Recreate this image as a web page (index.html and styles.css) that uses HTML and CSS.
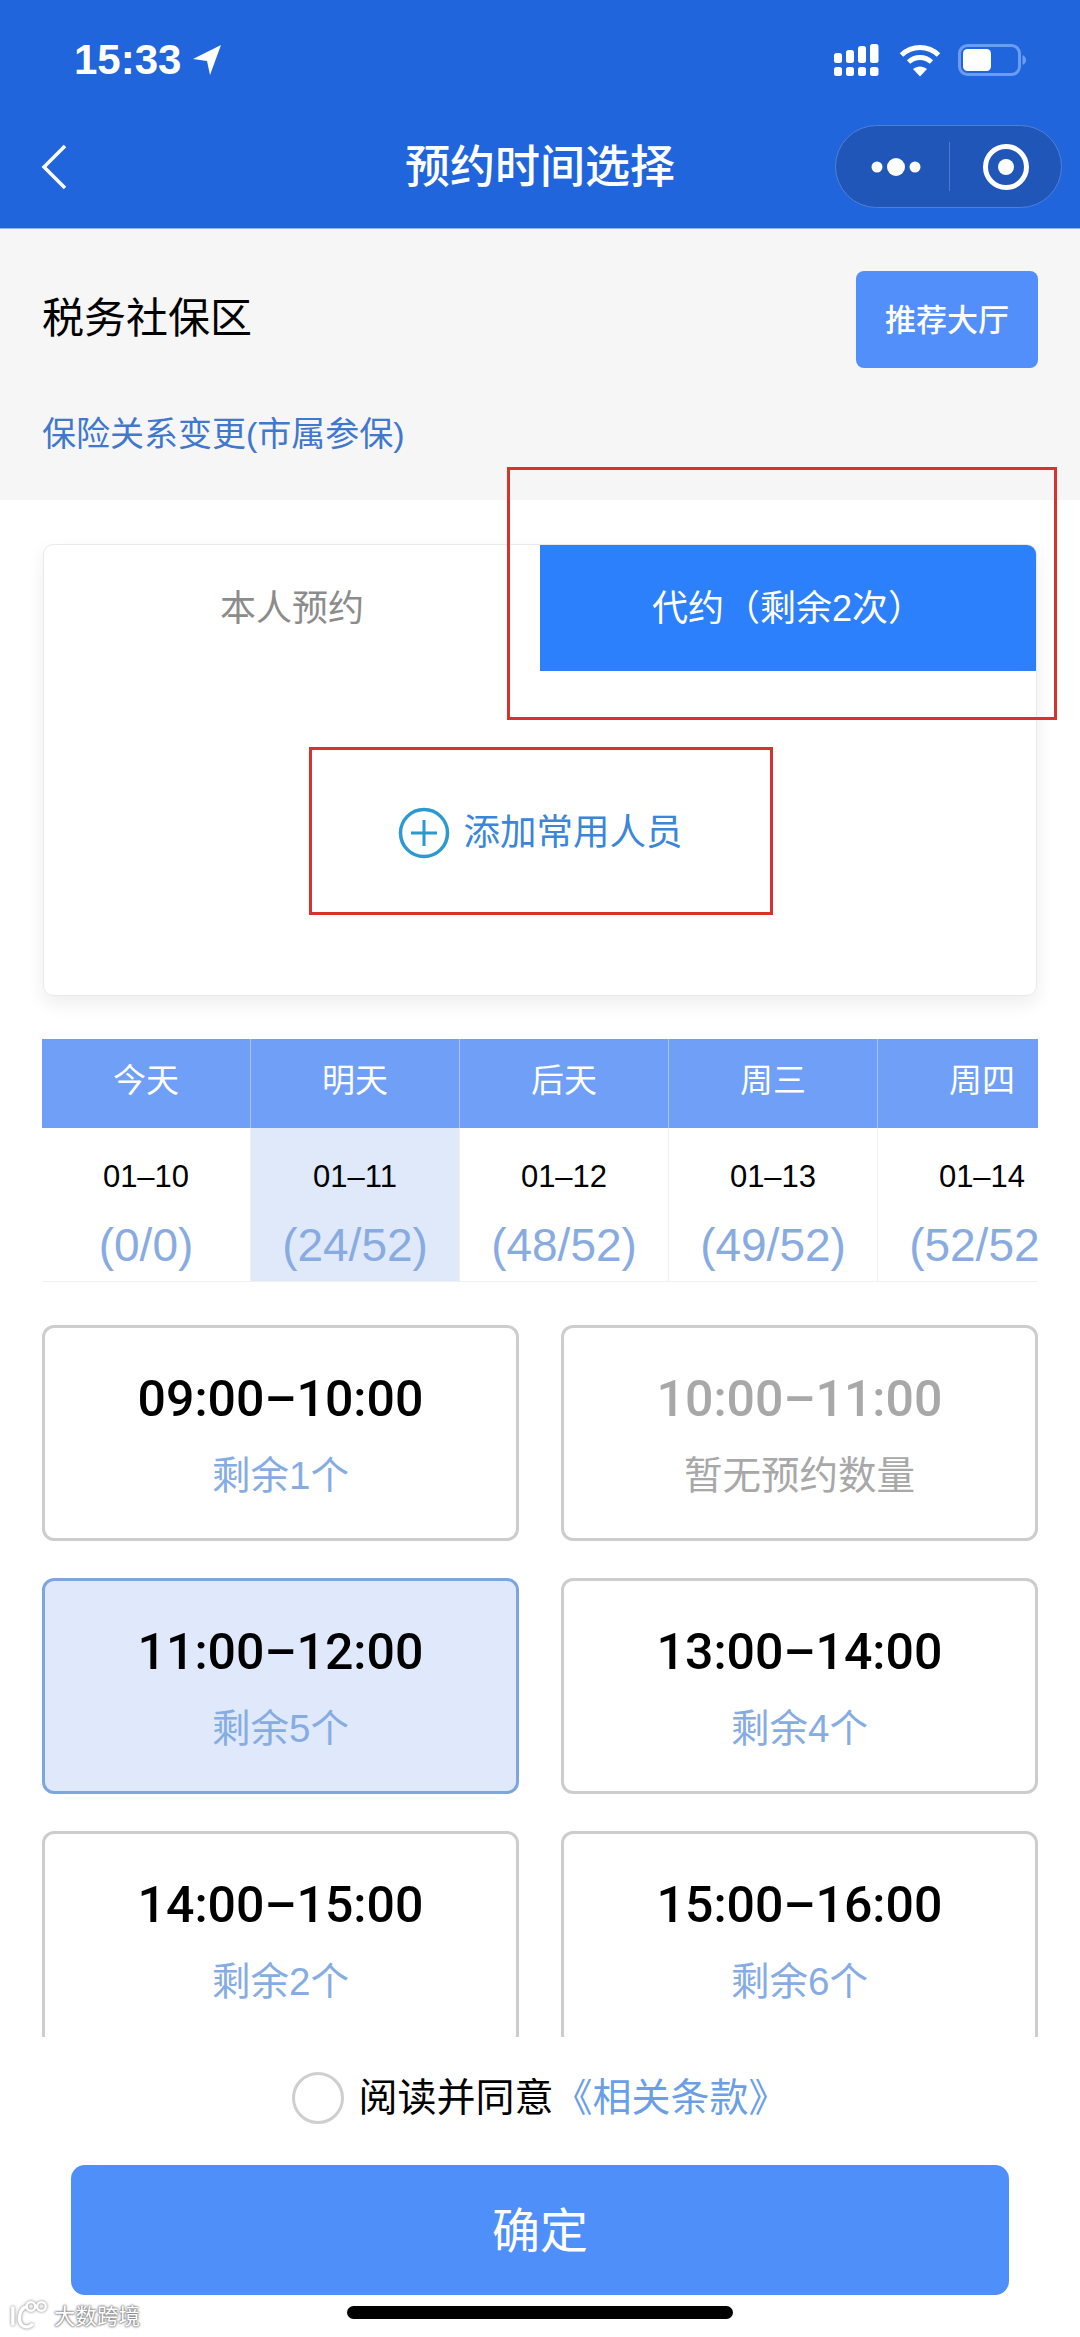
FILE: index.html
```html
<!DOCTYPE html>
<html lang="zh-CN">
<head>
  <title>预约时间选择</title>
  <meta charset="utf-8">
  <meta name="viewport" content="width=device-width, initial-scale=1.0">
  <link rel="stylesheet" href="styles.css">
</head>
<body>
  <div id="main">
    <div id="header">
      <div class="status">
        <div class="clock">
          <span>15:33</span>
          <svg class="arrow" width="30" height="32" viewBox="0 0 30 32"><path d="M29 1 L1 15 L15 17 L18 31 Z" fill="#fff"/></svg>
        </div>
        <div class="status-icons">
          <svg width="46" height="34" viewBox="0 0 46 34" fill="#fff">
            <rect x="0" y="10" width="8" height="10" rx="2.5"/><rect x="12" y="7" width="8" height="13" rx="2.5"/><rect x="24" y="3" width="8" height="17" rx="2.5"/><rect x="36" y="1" width="8.5" height="19" rx="2.5"/>
            <rect x="0" y="24" width="8" height="9" rx="2.5"/><rect x="12" y="24" width="8" height="9" rx="2.5"/><rect x="24" y="24" width="8" height="9" rx="2.5"/><rect x="36" y="24" width="8.5" height="9" rx="2.5"/>
          </svg>
          <svg class="wifi" width="42" height="33" viewBox="0 0 42 33" fill="none" stroke="#fff" stroke-width="5">
            <path d="M2.5 11 C13 1 29 1 39.500 11"/>
            <path d="M9.500 18 C16 12 26 12 32.500 18"/>
            <path d="M21 32.500 L14 25 C18 21.500 24 21.500 28 25 Z" fill="#fff" stroke="none"/>
          </svg>
          <svg class="battery" width="68" height="32" viewBox="0 0 68 32">
            <rect x="1.500" y="1.500" width="60" height="29" rx="8" fill="none" stroke="#6a9cf2" stroke-width="3"/>
            <rect x="5" y="5" width="28" height="22" rx="4.500" fill="#fff"/>
            <path d="M64.500 11 C67 12 68 14 68 16 C68 18 67 20 64.500 21 Z" fill="#6a9cf2"/>
          </svg>
        </div>
      </div>
      <div class="nav">
        <svg class="back" width="26" height="46" viewBox="0 0 26 46"><path d="M24 2 L3 23 L24 44" fill="none" stroke="#fff" stroke-width="3.500"/></svg>
        <div class="nav-title">预约时间选择</div>
        <div class="capsule">
          <svg width="62" height="22" viewBox="0 0 62 22" fill="#fff"><circle cx="7" cy="11" r="5.500"/><circle cx="26" cy="11" r="9"/><circle cx="45" cy="11" r="5.500"/></svg>
          <div class="capsule-line"></div>
          <svg width="48" height="48" viewBox="0 0 48 48"><circle cx="24" cy="24" r="20.500" fill="none" stroke="#fff" stroke-width="5"/><circle cx="24" cy="24" r="8" fill="#fff"/></svg>
        </div>
      </div>
    </div>

    <div id="hall">
      <div class="hall-row">
        <div class="hall-name">税务社保区</div>
        <div class="hall-btn">推荐大厅</div>
      </div>
      <div class="hall-type">保险关系变更(市属参保)</div>
    </div>

    <div id="booker">
      <div class="tabs">
        <div class="tab">本人预约</div>
        <div class="tab active">代约（剩余2次）</div>
      </div>
      <div class="add">
        <svg width="52" height="52" viewBox="0 0 52 52" fill="none" stroke="#2b9ad0" stroke-width="3.500"><circle cx="26" cy="26" r="23.500"/><path d="M13 26 H39 M26 13 V39" stroke-width="3"/></svg>
        <span>添加常用人员</span>
      </div>
    </div>

    <div id="days">
      <div class="day">
        <div class="day-name">今天</div>
        <div class="day-info"><div class="date">01–10</div><div class="count">(0/0)</div></div>
      </div>
      <div class="day selected">
        <div class="day-name">明天</div>
        <div class="day-info"><div class="date">01–11</div><div class="count">(24/52)</div></div>
      </div>
      <div class="day">
        <div class="day-name">后天</div>
        <div class="day-info"><div class="date">01–12</div><div class="count">(48/52)</div></div>
      </div>
      <div class="day">
        <div class="day-name">周三</div>
        <div class="day-info"><div class="date">01–13</div><div class="count">(49/52)</div></div>
      </div>
      <div class="day">
        <div class="day-name">周四</div>
        <div class="day-info"><div class="date">01–14</div><div class="count">(52/52)</div></div>
      </div>
    </div>

    <div id="slots">
      <div class="slot">
        <div class="time">09:00–10:00</div>
        <div class="left">剩余1个</div>
      </div>
      <div class="slot off">
        <div class="time">10:00–11:00</div>
        <div class="left">暂无预约数量</div>
      </div>
      <div class="slot picked">
        <div class="time">11:00–12:00</div>
        <div class="left">剩余5个</div>
      </div>
      <div class="slot">
        <div class="time">13:00–14:00</div>
        <div class="left">剩余4个</div>
      </div>
      <div class="slot">
        <div class="time">14:00–15:00</div>
        <div class="left">剩余2个</div>
      </div>
      <div class="slot">
        <div class="time">15:00–16:00</div>
        <div class="left">剩余6个</div>
      </div>
    </div>

    <div id="agree">
      <div class="radio"></div>
      <span>阅读并同意</span>
      <span class="terms">《相关条款》</span>
    </div>

    <div id="confirm">确定</div>
    <div id="home-bar"></div>

    <div class="mark mark-tab"></div>
    <div class="mark mark-add"></div>
    <div class="watermark">
      <svg width="40" height="30" viewBox="0 0 42 30" fill="none" stroke="#fff" stroke-width="3.500">
        <path d="M3 6 V26 M18 6 C9 8 8 22 13 26 C17 29 22 27 24 24"/>
        <circle cx="22" cy="6" r="4.500" stroke-width="2.500"/><circle cx="33" cy="6" r="4.500" stroke-width="2.500"/>
      </svg>
      <span>大数跨境</span>
    </div>
  </div>
</body>
</html>
```

FILE: styles.css
```css
html, body {
  margin: 0;
  padding: 0;
  height: 100%;
  background-color: #fff;
}

#main {
  position: relative;
  display: flex;
  flex-direction: column;
  width: 1080px;
  height: 2337px;
  overflow: hidden;
  font-family: "Liberation Sans", "Noto Sans CJK SC", sans-serif;
  color: #000;
}

/* top blue bar */
#header {
  height: 229px;
  flex: none;
  box-sizing: border-box;
  background-color: #2165dd;
  border-bottom: 1px solid #8fb4ee;
  color: #fff;
}

.status {
  display: flex;
  justify-content: space-between;
  align-items: center;
  height: 120px;
  padding: 0 54px 0 74px;
}

.clock {
  display: flex;
  align-items: center;
  gap: 11px;
  font-size: 42px;
  font-weight: bold;
}

.status-icons {
  display: flex;
  align-items: center;
  gap: 17px;
}

.wifi {
  margin-left: 2px;
}

.nav {
  display: grid;
  grid-template-columns: 1fr auto 1fr;
  align-items: center;
  padding: 5px 18px 0;
  height: 83px;
}

.back {
  margin-left: 23px;
}

.nav-title {
  padding-bottom: 6px;
  font-size: 45px;
  font-weight: 500;
}

.capsule {
  justify-self: end;
  display: flex;
  align-items: center;
  box-sizing: border-box;
  width: 227px;
  height: 83px;
  padding-left: 34px;
  border: 1px solid #4f80d8;
  border-radius: 42px;
  background-color: #1f56b8;
}

.capsule-line {
  width: 1px;
  height: 49px;
  margin: 0 32px 0 17px;
  background-color: #4a79d0;
}

/* hall info */
#hall {
  flex: none;
  box-sizing: border-box;
  height: 271px;
  padding: 42px 42px 0;
  background-color: #f6f6f6;
}

.hall-row {
  display: flex;
  justify-content: space-between;
  align-items: center;
}

.hall-name {
  padding-bottom: 10px;
  font-size: 42px;
}

.hall-btn {
  display: flex;
  align-items: center;
  justify-content: center;
  box-sizing: border-box;
  width: 182px;
  height: 97px;
  padding-bottom: 5px;
  border-radius: 8px;
  background-color: #528ffa;
  color: #fff;
  font-size: 31px;
  font-weight: 500;
}

.hall-type {
  margin-top: 39px;
  font-size: 34px;
  color: #3f78cc;
}

/* who the booking is for */
#booker {
  flex: none;
  display: flex;
  flex-direction: column;
  box-sizing: border-box;
  width: 994px;
  height: 452px;
  margin: 44px 0 43px 43px;
  border: 1px solid #e9e9e9;
  border-radius: 10px;
  box-shadow: 0 8px 18px rgba(0, 0, 0, 0.07);
  overflow: hidden;
}

.tabs {
  display: flex;
  height: 126px;
}

.tab {
  flex: 1;
  display: flex;
  align-items: center;
  justify-content: center;
  padding-bottom: 6px;
  font-size: 36px;
  color: #8c8c8c;
}

.tab.active {
  background-color: #2c80fc;
  color: #fff;
}

.add {
  flex: 1;
  display: flex;
  align-items: center;
  justify-content: center;
  gap: 14px;
  font-size: 36.500px;
  color: #3a86d8;
}

.add span {
  padding-bottom: 7px;
}

/* date strip, last column runs off the edge */
#days {
  flex: none;
  display: flex;
  width: 996px;
  margin-left: 42px;
  overflow: hidden;
}

.day {
  flex: 0 0 209px;
  box-sizing: border-box;
  border-right: 1px solid #f0f0f0;
  border-bottom: 1px solid #f0f0f0;
  text-align: center;
}

.day-name {
  height: 89px;
  line-height: 84px;
  box-sizing: border-box;
  margin-right: -1px;
  border-right: 1px solid #a9c5f8;
  background-color: #6f9ff6;
  color: #fff;
  font-size: 33px;
}

.day-info {
  height: 153px;
}

.selected .day-info {
  background-color: #dfe9fa;
}

.date {
  padding-top: 30px;
  font-size: 31px;
  line-height: 38px;
}

.count {
  margin-top: 22px;
  font-size: 46px;
  line-height: 54px;
  color: #88abe2;
  white-space: nowrap;
}

/* time slots, cut off by the footer */
#slots {
  flex: none;
  display: grid;
  grid-template-columns: 477px 477px;
  grid-auto-rows: 216px;
  column-gap: 42px;
  row-gap: 37px;
  height: 755px;
  padding: 43px 0 0 42px;
  box-sizing: border-box;
  overflow: hidden;
}

.slot {
  box-sizing: border-box;
  border: 3px solid #cdcdcd;
  border-radius: 12px;
  text-align: center;
}

.slot.picked {
  border-color: #7ea6de;
  background-color: #dfe9fb;
}

.time {
  padding-top: 42px;
  font-family: Roboto, "Liberation Sans", sans-serif;
  font-size: 50px;
  line-height: 58px;
  font-weight: 500;
}

.left {
  margin-top: 20px;
  font-size: 38.500px;
  line-height: 56px;
  color: #86ace4;
}

.off .time,
.off .left {
  color: #a8a8a8;
}

/* footer */
#agree {
  flex: none;
  display: flex;
  align-items: center;
  justify-content: center;
  height: 122px;
  font-size: 39px;
}

#agree span {
  padding-bottom: 8px;
}

.radio {
  box-sizing: border-box;
  width: 52px;
  height: 52px;
  margin-right: 14px;
  border: 3px solid #cfcfcf;
  border-radius: 50%;
}

.terms {
  color: #6a9fe8;
}

#confirm {
  flex: none;
  display: flex;
  align-items: center;
  justify-content: center;
  box-sizing: border-box;
  width: 938px;
  height: 130px;
  margin: 6px 0 0 71px;
  padding-bottom: 6px;
  border-radius: 14px;
  background-color: #4f8ff9;
  color: #fff;
  font-size: 48px;
}

#home-bar {
  flex: none;
  width: 386px;
  height: 13px;
  margin: 11px 0 0 347px;
  border-radius: 7px;
  background-color: #000;
}

/* red annotations drawn on top of the screenshot */
.mark {
  position: absolute;
  box-sizing: border-box;
  border: 3px solid #d8322a;
}

.mark-tab {
  left: 507px;
  top: 467px;
  width: 550px;
  height: 253px;
}

.mark-add {
  left: 309px;
  top: 747px;
  width: 464px;
  height: 168px;
}

.watermark {
  position: absolute;
  left: 10px;
  top: 2299px;
  display: flex;
  align-items: center;
  gap: 4px;
  font-size: 21.500px;
  color: #fff;
  text-shadow: 0 0 2px #777, 0 0 2px #777, 0 0 3px #999;
}

.watermark svg {
  filter: drop-shadow(0 0 1.500px #777);
}
```
